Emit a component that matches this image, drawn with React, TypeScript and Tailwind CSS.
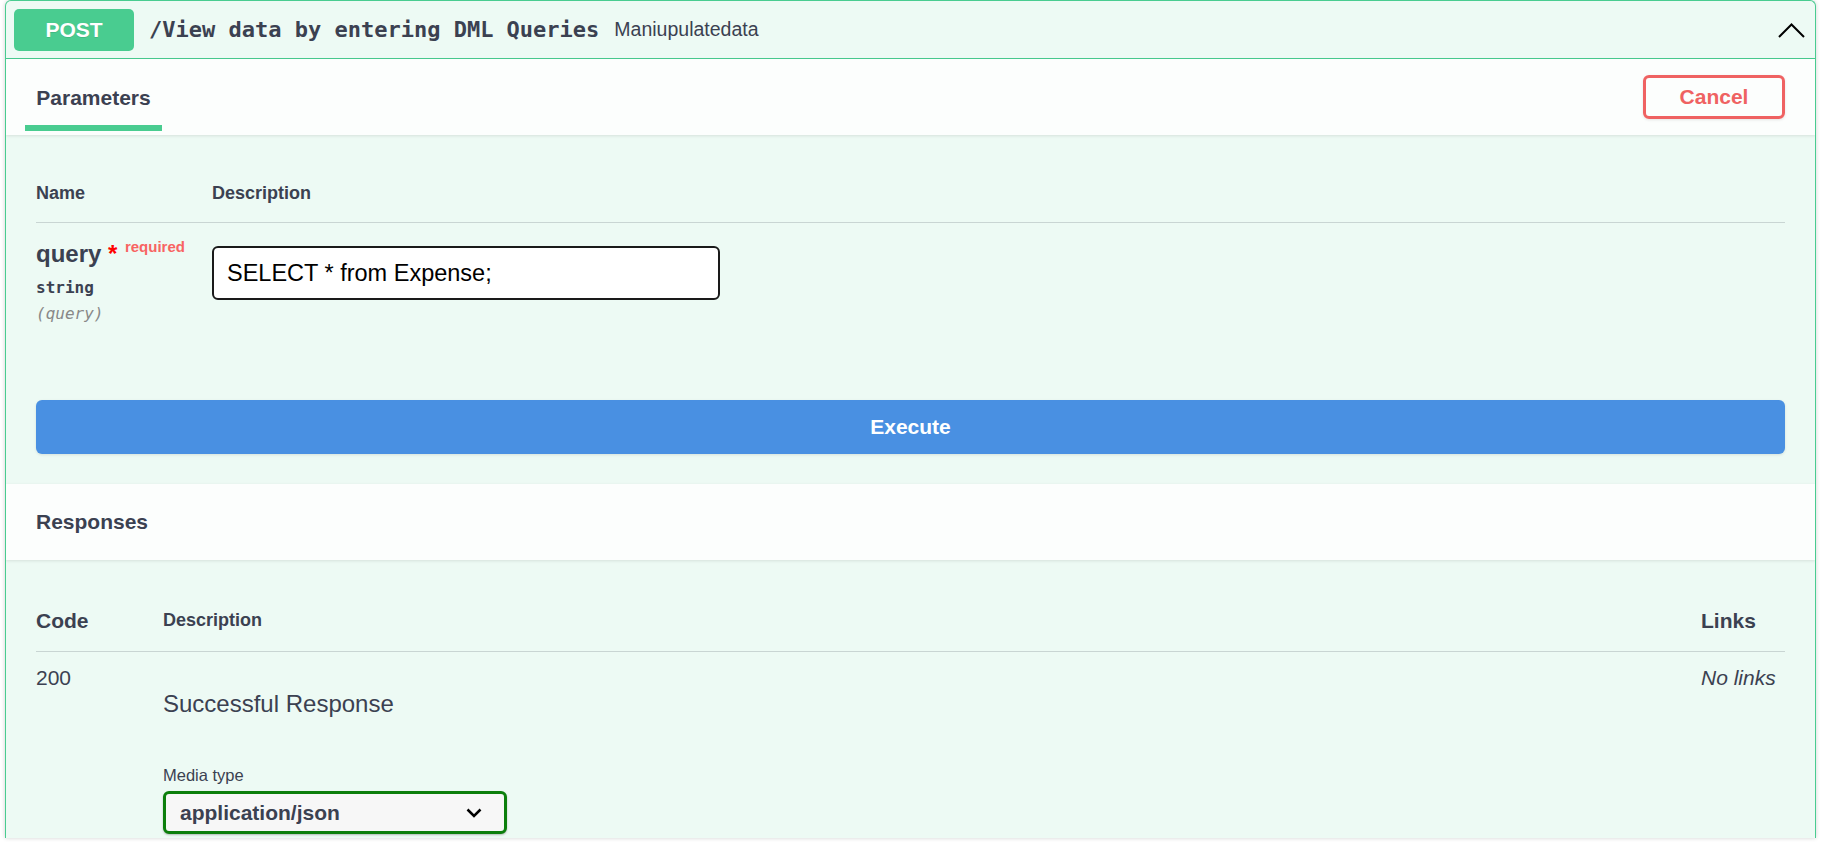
const ChevronUp = () => (
  <svg width="30" height="30" viewBox="0 0 30 30" className="shrink-0">
    <polyline points="2,22 14.5,9.5 27,22" fill="none" stroke="#000" strokeWidth="2" />
  </svg>
);

const ChevronDown = () => (
  <svg width="16" height="10" viewBox="0 0 16 10" className="shrink-0">
    <polyline points="1.5,1.5 8,8 14.5,1.5" fill="none" stroke="#000" strokeWidth="2.5" />
  </svg>
);

export default function App() {
  return (
    <div className="h-[862px] w-full overflow-hidden bg-white font-['Liberation_Sans',Arial,sans-serif] text-[#3b4151]">
      <div className="ml-[5px] h-[838px] w-[1811px] overflow-hidden rounded-t-[6px] border border-b-0 border-[#49cc90] bg-[#edfaf4] shadow-[0_0_4px_rgba(0,0,0,0.19)]">
        {/* summary */}
        <div className="flex h-[58px] items-center border-b border-[#49cc90] px-[8px]">
          <div className="flex h-[42px] w-[120px] items-center justify-center rounded-[5px] bg-[#49cc90] text-[21px] font-bold text-white [text-shadow:0_1px_0_rgba(0,0,0,0.1)]">
            POST
          </div>
          <span className="px-[15px] font-['DejaVu_Sans_Mono',monospace] text-[22px] font-bold">
            /View data by entering DML Queries
          </span>
          <span className="flex-1 text-[19.5px]">Maniupulatedata</span>
          <ChevronUp />
        </div>

        {/* parameters header */}
        <div className="flex h-[76px] items-start justify-between bg-[#fcfefd] pl-[19px] pr-[30px] shadow-[0_1px_3px_rgba(0,0,0,0.1)]">
          <div className="flex w-[137px] flex-col items-center pt-[27px]">
            <h4 className="text-[21px] font-bold leading-[24px]">Parameters</h4>
            <div className="mt-[15px] h-[6px] w-full bg-[#49cc90]" />
          </div>
          <button className="mt-[16px] h-[44px] w-[142px] rounded-[6px] border-[3px] border-[#ef6262] text-[21px] font-bold text-[#ef6262] shadow-[0_1px_3px_rgba(0,0,0,0.1)]">
            Cancel
          </button>
        </div>

        {/* parameters table */}
        <div className="h-[235px] px-[30px] pt-[30px]">
          <div className="flex border-b border-[#c9d5d3] pb-[18px] pt-[18px] text-[18px] font-bold leading-[21px]">
            <div className="w-[176px]">Name</div>
            <div>Description</div>
          </div>
          <div className="flex items-start">
            <div className="flex w-[176px] flex-col pt-[17px]">
              <div className="text-[24px] font-bold leading-[28px]">
                query<span className="text-[#ff0000]">&nbsp;*</span>
                <span className="pl-[7.5px] align-[10px] text-[15px] leading-[10px] text-[#f86462]">required</span>
              </div>
              <div className="mt-[10px] font-['DejaVu_Sans_Mono',monospace] text-[16px] font-bold leading-[20px]">
                string
              </div>
              <div className="mt-[6px] font-['DejaVu_Sans_Mono',monospace] text-[16px] italic leading-[20px] text-[#888888]">
                (query)
              </div>
            </div>
            <div className="pt-[23px]">
              <input
                defaultValue="SELECT * from Expense;"
                className="h-[54px] w-[508px] rounded-[6px] border-2 border-[#1a1a1a] bg-white pl-[13px] text-[23.5px] text-black outline-none"
              />
            </div>
          </div>
        </div>

        {/* execute */}
        <div className="p-[30px]">
          <button className="h-[54px] w-full rounded-[6px] bg-[#4990e2] text-[21px] font-bold text-white shadow-[0_1px_3px_rgba(0,0,0,0.1)]">
            Execute
          </button>
        </div>

        {/* responses header */}
        <div className="flex h-[76px] items-center bg-[#fcfefd] px-[30px] shadow-[0_1px_3px_rgba(0,0,0,0.1)]">
          <h4 className="text-[21px] font-bold leading-[24px]">Responses</h4>
        </div>

        {/* responses table */}
        <div className="px-[30px] pt-[30px]">
          <div className="flex h-[62px] items-center border-b border-[#c9d5d3] font-bold">
            <div className="w-[127px] text-[21px] leading-[24px]">Code</div>
            <div className="flex-1 text-[18px] leading-[21px]">Description</div>
            <div className="w-[84px] text-[21px] leading-[24px]">Links</div>
          </div>
          <div className="flex items-start pt-[14px]">
            <div className="w-[127px] text-[21px] leading-[24px]">200</div>
            <div className="flex flex-1 flex-col items-start">
              <div className="mt-[24px] text-[24px] leading-[28px]">Successful Response</div>
              <div className="mt-[48px] text-[16.5px] leading-[19px]">Media type</div>
              <div className="mt-[6px] flex h-[43px] w-[344px] items-center justify-between rounded-[6px] border-[3px] border-[#0c7f0c] bg-[#f7f7f7] pl-[14px] pr-[22px] text-[21px] font-bold shadow-[0_1px_2px_rgba(0,0,0,0.25)]">
                <span>application/json</span>
                <ChevronDown />
              </div>
            </div>
            <div className="w-[84px] text-[21px] italic leading-[24px]">No links</div>
          </div>
        </div>
      </div>
    </div>
  );
}
